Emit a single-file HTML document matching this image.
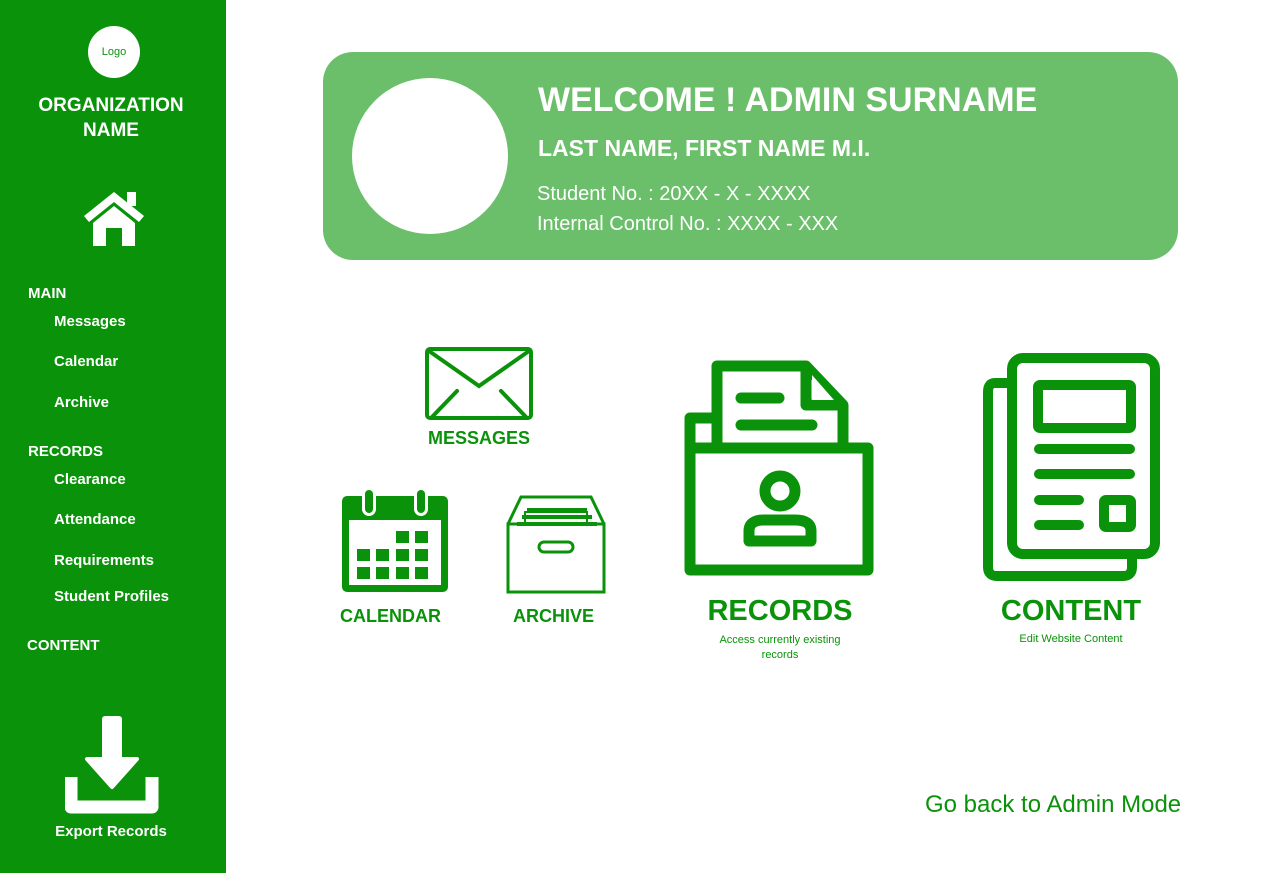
<!DOCTYPE html>
<html><head><style>
*{margin:0;padding:0;box-sizing:border-box}
body{width:1280px;height:873px;background:#fff;font-family:"Liberation Sans",sans-serif;position:relative;overflow:hidden}
.sb{position:absolute;left:0;top:0;width:226px;height:873px;background:#0a930a;color:#fff}
.a{position:absolute;white-space:nowrap}
.sb .a{font-weight:bold;font-size:15px}
.g{color:#0a930a;font-weight:bold}
</style></head><body>
<div class="sb">
<div class="a" style="left:88px;top:26px;width:52px;height:52px;border-radius:50%;background:#fff;color:#0a930a;font-size:11px;font-weight:normal;text-align:center;line-height:52px">Logo</div>
<div class="a" style="left:0;width:222px;top:93px;text-align:center;font-size:19px;line-height:25px">ORGANIZATION<br>NAME</div>
<svg class="a" style="left:83px;top:190px" width="62" height="58" viewBox="0 0 62 58"><path d="M1 26 L31 2 L61 26 L56 32 L31 12 L6 32Z" fill="#fff"/><rect x="44" y="2" width="9" height="14" fill="#fff"/><path d="M10 33 L31 16 L52 33 V56 H39 V38 H23 V56 H10Z" fill="#fff"/></svg>
<div class="a" style="left:28px;top:285px">MAIN</div>
<div class="a" style="left:54px;top:313px">Messages</div>
<div class="a" style="left:54px;top:353px">Calendar</div>
<div class="a" style="left:54px;top:394px">Archive</div>
<div class="a" style="left:28px;top:443px">RECORDS</div>
<div class="a" style="left:54px;top:471px">Clearance</div>
<div class="a" style="left:54px;top:511px">Attendance</div>
<div class="a" style="left:54px;top:552px">Requirements</div>
<div class="a" style="left:54px;top:588px">Student Profiles</div>
<div class="a" style="left:27px;top:637px">CONTENT</div>
<svg class="a" style="left:65px;top:715px" width="94" height="100" viewBox="0 0 94 100"><rect x="37" y="1" width="20" height="45" rx="3" fill="#fff"/><path d="M22 44 H72 L47 72Z" fill="#fff" stroke="#fff" stroke-width="4" stroke-linejoin="round"/><path d="M6 62 V92 H87 V62" fill="none" stroke="#fff" stroke-width="13" stroke-linejoin="round"/></svg>
<div class="a" style="left:0;width:222px;text-align:center;top:823px">Export Records</div>
</div>

<div class="a" style="left:323px;top:52px;width:855px;height:208px;border-radius:30px;background:#6bbf6b"></div>
<div class="a" style="left:352px;top:78px;width:156px;height:156px;border-radius:50%;background:#fff"></div>
<div class="a" style="left:538px;top:81px;color:#fff;font-weight:bold;font-size:34px">WELCOME ! ADMIN SURNAME</div>
<div class="a" style="left:538px;top:135px;color:#fff;font-weight:bold;font-size:23px">LAST NAME, FIRST NAME M.I.</div>
<div class="a" style="left:537px;top:183px;color:#fff;font-size:20px">Student No. : 20XX - X - XXXX</div>
<div class="a" style="left:537px;top:213px;color:#fff;font-size:20px">Internal Control No. : XXXX - XXX</div>

<svg class="a" style="left:424px;top:346px" width="110" height="75" viewBox="0 0 110 75"><rect x="3" y="3" width="104" height="69" rx="3" fill="none" stroke="#0a930a" stroke-width="4"/><path d="M5 5 L55 40 L105 5 M33 45 L8 71 M77 45 L102 71" fill="none" stroke="#0a930a" stroke-width="4" stroke-linecap="round"/></svg>
<div class="a g" style="left:428px;top:428px;font-size:18px">MESSAGES</div>

<svg class="a" style="left:339px;top:486px" width="112" height="110" viewBox="0 0 112 110"><rect x="3" y="10" width="106" height="96" rx="5" fill="#0a930a"/><rect x="10" y="34" width="92" height="65" fill="#fff"/><rect x="23" y="2" width="14" height="28" rx="7" fill="#fff"/><rect x="75" y="2" width="14" height="28" rx="7" fill="#fff"/><rect x="26" y="4" width="8" height="23" rx="4" fill="#0a930a"/><rect x="78" y="4" width="8" height="23" rx="4" fill="#0a930a"/><g fill="#0a930a"><rect x="57" y="45" width="13" height="12"/><rect x="76" y="45" width="13" height="12"/><rect x="18" y="63" width="13" height="12"/><rect x="37" y="63" width="13" height="12"/><rect x="57" y="63" width="13" height="12"/><rect x="76" y="63" width="13" height="12"/><rect x="18" y="81" width="13" height="12"/><rect x="37" y="81" width="13" height="12"/><rect x="57" y="81" width="13" height="12"/><rect x="76" y="81" width="13" height="12"/></g></svg>
<div class="a g" style="left:340px;top:606px;font-size:18px">CALENDAR</div>

<svg class="a" style="left:505px;top:494px" width="102" height="102" viewBox="0 0 102 102"><path d="M3 30 L16 3 H86 L99 30" fill="none" stroke="#0a930a" stroke-width="3"/><rect x="3" y="30" width="96" height="68" fill="none" stroke="#0a930a" stroke-width="3"/><path d="M22 16 H82 M17 23 H87 M12 30 H92" stroke="#0a930a" stroke-width="4"/><rect x="20" y="18" width="62" height="12" fill="none" stroke="#0a930a" stroke-width="2"/><rect x="34" y="48" width="34" height="10" rx="5" fill="none" stroke="#0a930a" stroke-width="3"/></svg>
<div class="a g" style="left:513px;top:606px;font-size:18px">ARCHIVE</div>

<svg class="a" style="left:684px;top:360px" width="192" height="218" viewBox="0 0 192 218"><g fill="none" stroke="#0a930a" stroke-width="11" stroke-linejoin="round"><path d="M33 88 V6 H122 L159 45 V88"/><path d="M33 58 H6 V210 H184 V88 H6"/><path d="M122 6 V45 H159"/></g><path d="M128 15 L150 40 H128Z" fill="#fff"/><path d="M57 38 H95 M57 65 H128" stroke="#0a930a" stroke-width="11" stroke-linecap="round"/><circle cx="96" cy="131" r="15" fill="none" stroke="#0a930a" stroke-width="11"/><path d="M65 181 V171 Q65 160 80 160 H111 Q127 160 127 171 V181Z" fill="none" stroke="#0a930a" stroke-width="11" stroke-linejoin="round"/></svg>
<div class="a g" style="left:680px;width:200px;text-align:center;top:595px;font-size:29px">RECORDS</div>
<div class="a" style="left:680px;width:200px;text-align:center;top:633px;font-size:11px;color:#0a930a;white-space:normal;line-height:15px">Access currently existing<br>records</div>

<svg class="a" style="left:981px;top:352px" width="182" height="230" viewBox="0 0 182 230"><g fill="none" stroke="#0a930a" stroke-width="10" stroke-linejoin="round"><path d="M29 31 H14 Q7 31 7 40 V215 Q7 224 16 224 H142 Q151 224 151 215 V205"/><rect x="31" y="6" width="143" height="196" rx="11"/><rect x="57" y="33" width="93" height="43" rx="2"/><rect x="123" y="148" width="27" height="27" rx="2"/></g><path d="M58 97 H149 M58 122 H149 M58 148 H98 M58 173 H98" stroke="#0a930a" stroke-width="10" stroke-linecap="round"/></svg>
<div class="a g" style="left:971px;width:200px;text-align:center;top:595px;font-size:29px">CONTENT</div>
<div class="a" style="left:971px;width:200px;text-align:center;top:633px;font-size:11px;color:#0a930a">Edit Website Content</div>

<div class="a" style="left:925px;top:791px;font-size:24px;color:#0a930a">Go back to Admin Mode</div>
</body></html>
